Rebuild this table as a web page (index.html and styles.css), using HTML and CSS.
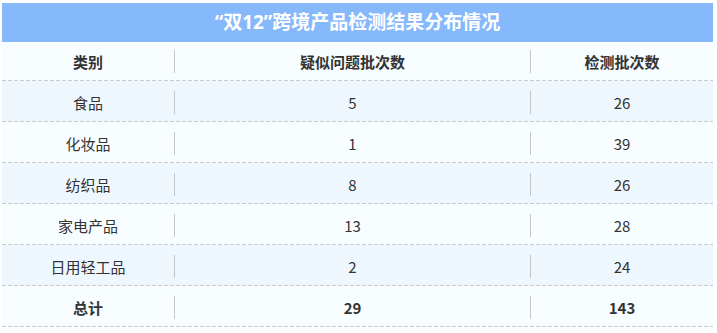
FILE: index.html
```html
<!DOCTYPE html>
<html lang="zh">
<head>
<meta charset="utf-8">
<link rel="stylesheet" href="styles.css">
</head>
<body>
<div class="table">
  <div class="title">“双12”跨境产品检测结果分布情况</div>
  <div class="row head">
    <div class="cell">类别</div>
    <div class="cell sep">疑似问题批次数</div>
    <div class="cell sep">检测批次数</div>
  </div>
  <div class="row odd">
    <div class="cell">食品</div>
    <div class="cell sep">5</div>
    <div class="cell sep">26</div>
  </div>
  <div class="row even">
    <div class="cell">化妆品</div>
    <div class="cell sep">1</div>
    <div class="cell sep">39</div>
  </div>
  <div class="row odd">
    <div class="cell">纺织品</div>
    <div class="cell sep">8</div>
    <div class="cell sep">26</div>
  </div>
  <div class="row even">
    <div class="cell">家电产品</div>
    <div class="cell sep">13</div>
    <div class="cell sep">28</div>
  </div>
  <div class="row odd">
    <div class="cell">日用轻工品</div>
    <div class="cell sep">2</div>
    <div class="cell sep">24</div>
  </div>
  <div class="row even total">
    <div class="cell">总计</div>
    <div class="cell sep">29</div>
    <div class="cell sep">143</div>
  </div>
</div>
</body>
</html>
```

FILE: styles.css
```css
html, body {
  margin: 0;
  padding: 0;
  background: #ffffff;
}

body {
  font-family: "Noto Sans CJK SC", "Noto Sans", sans-serif;
  color: #333333;
}

.table {
  width: 711px;
  margin: 3px 0 0 2px;
}

.title {
  height: 39px;
  line-height: 39px;
  background: #86b9fb;
  color: #ffffff;
  font-family: "Noto Sans", "Noto Sans CJK SC", sans-serif;
  font-weight: bold;
  font-size: 19px;
  text-align: center;
}

.row {
  display: grid;
  grid-template-columns: 172px 356px 183px;
  padding-bottom: 1px;
  background-image: linear-gradient(to right, #c9c9c9 4px, transparent 4px);
  background-size: 6px 1px;
  background-repeat: repeat-x;
  background-position: left bottom;
}

.cell {
  height: 23px;
  line-height: 23px;
  margin: 10px 0 7px;
  font-size: 15px;
  text-align: center;
}

.head .cell {
  margin-top: 8px;
  font-weight: bold;
}

.sep {
  border-left: 1px solid #c6c6c6;
}

.head,
.even {
  background-color: #f8fdff;
}

.odd {
  background-color: #eff7fe;
}

.total .cell {
  font-weight: bold;
}
```
